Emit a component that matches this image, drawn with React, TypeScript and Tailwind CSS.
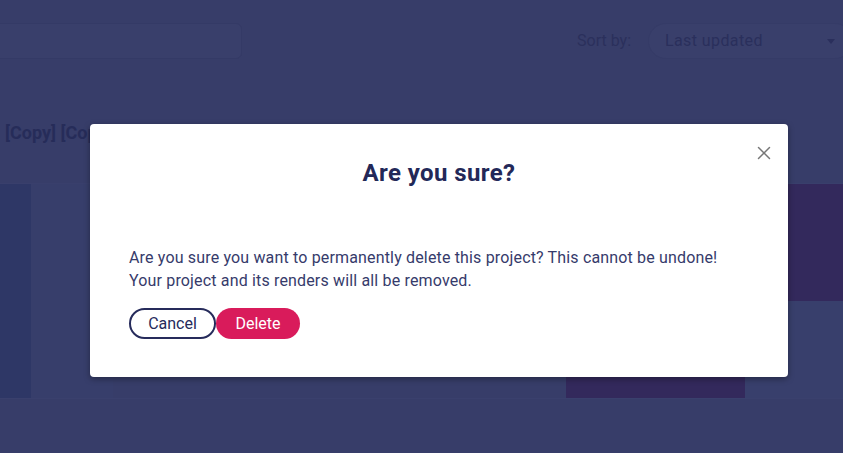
import { X } from "lucide-react";

const font = { fontFamily: "Roboto, 'Liberation Sans', sans-serif" };

const App = () => {
  return (
    <div
      className="relative w-[843px] h-[453px] overflow-hidden bg-[#373d69]"
      style={font}
    >
      {/* dimmed page behind the modal */}
      <div className="flex items-center justify-between pt-[23px] h-[59px]">
        <div className="-ml-[20px] w-[262px] h-[36px] rounded-md border border-[#343a66] bg-[#393f6b]" />
        <div className="flex items-center gap-[17px]">
          <span className="text-[16px] text-[#2b305c]">Sort by:</span>
          <div className="flex items-center justify-between w-[205px] h-[36px] -mr-[10px] pl-[16px] pr-[17px] rounded-full border border-[#353b67] bg-[#393f6b]">
            <span className="text-[16px] tracking-[0.4px] text-[#2a2f5c]">Last updated</span>
            <span className="w-0 h-0 border-l-[4px] border-r-[4px] border-t-[5px] border-l-transparent border-r-transparent border-t-[#2a2f5c]" />
          </div>
        </div>
      </div>

      <div className="pl-[5px] pt-[62px] h-[124px] text-[18px] font-bold leading-[24px] text-[#262c59] whitespace-nowrap">
        [Copy] [Copy] Untitled project
      </div>

      {/* cards row */}
      <div className="flex justify-between h-[215px] border-t border-[#393f6c]">
        <div className="flex w-[113px] bg-[#373e6b]">
          <div className="w-[31px] bg-[#2e3766]" />
        </div>
        <div className="flex flex-col w-[277px] bg-[#383f6c]">
          <div className="h-[117px] bg-[#33295c]" />
          <div className="flex-1 flex flex-col justify-end">
            <div className="w-[179px] h-[48px] bg-[#33295c]" />
          </div>
        </div>
      </div>
      <div className="border-t border-[#3a406d]" />

      {/* modal */}
      <div className="absolute left-[90px] top-[124px] w-[698px] h-[253px] rounded-[4px] bg-white shadow-[0_2px_6px_rgba(0,0,0,0.35)] px-[39px]">
        <button className="absolute right-[13px] top-[18px] text-[#777777]">
          <X size={22} strokeWidth={1.6} />
        </button>
        <h2 className="pt-[34px] text-center text-[24px] font-bold tracking-[0.4px] leading-[30px] text-[#232858]">
          Are you sure?
        </h2>
        <p className="mt-[58px] text-[16px] tracking-[0.16px] leading-[23px] text-[#363b6b]">
          Are you sure you want to permanently delete this project? This cannot be undone!
          <br />
          Your project and its renders will all be removed.
        </p>
        <div className="mt-[16px] flex">
          <button className="h-[31px] w-[87px] rounded-full border-2 border-[#262b5b] text-[16px] text-[#262b5b]">
            Cancel
          </button>
          <button className="h-[31px] w-[84px] rounded-full bg-[#d91b5b] text-[16px] text-white">
            Delete
          </button>
        </div>
      </div>
    </div>
  );
};

export default App;
